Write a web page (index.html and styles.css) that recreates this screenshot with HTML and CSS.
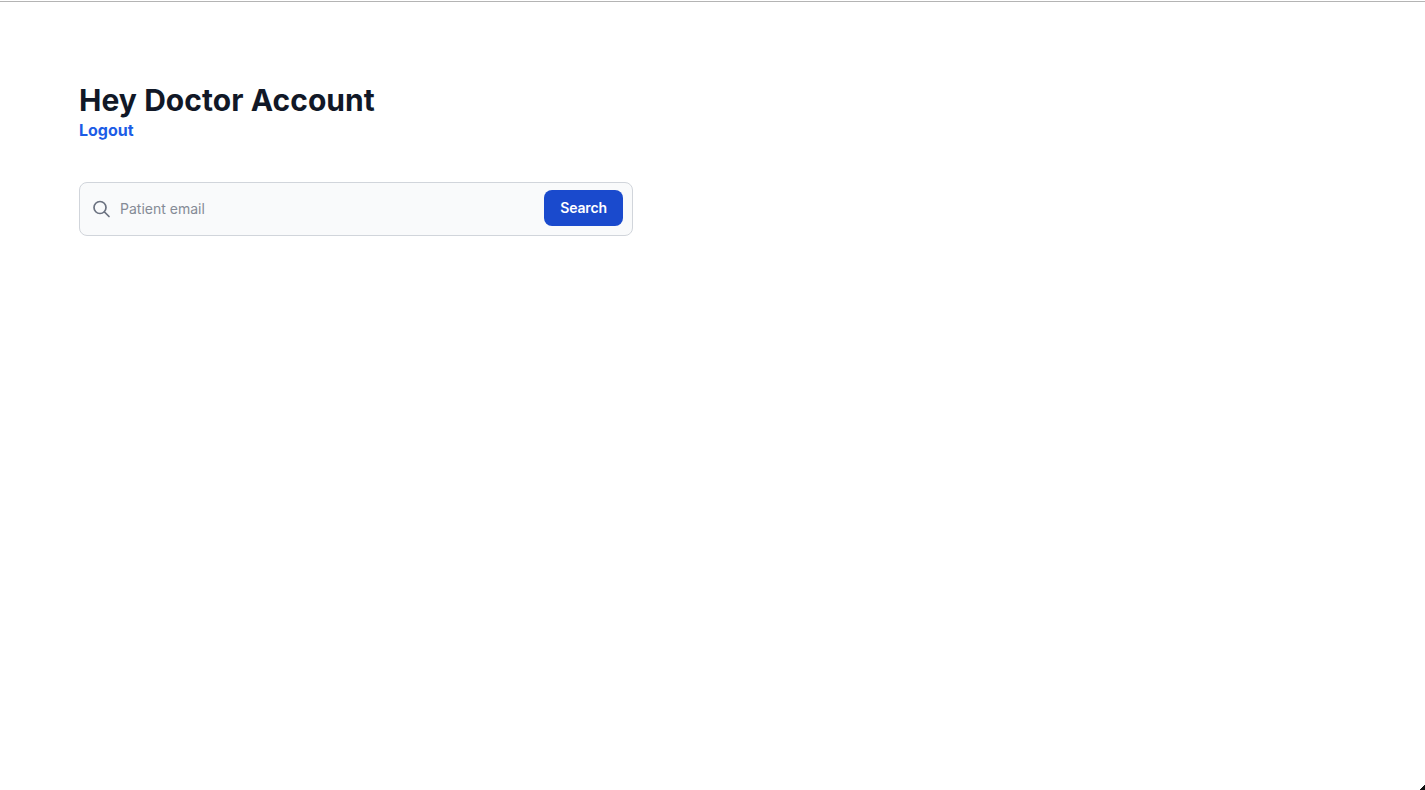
FILE: index.html
```html
<!DOCTYPE html>
<html lang="en">
<head>
    <meta charset="UTF-8">
    <title>Hey Doctor Account</title>
    <link rel="stylesheet" href="styles.css">
</head>
<body>
    <div class="topline"></div>
    <div class="page">
        <h1>Hey Doctor Account</h1>
        <a class="logout" href="#">Logout</a>
        <form class="search">
            <svg class="search-icon" width="20" height="20" viewBox="0 0 20 20" fill="none" stroke="currentColor" stroke-width="1.7" stroke-linecap="round">
                <circle cx="8" cy="8.5" r="6"/>
                <path d="M12.5 13l4.5 4.5"/>
            </svg>
            <input type="text" placeholder="Patient email">
            <button type="button">Search</button>
        </form>
    </div>
    <div class="corner"></div>
</body>
</html>
```

FILE: styles.css
```css
*{
    margin: 0;
    padding: 0;
    box-sizing: border-box;
}
html,body{
    height: 100%;
    overflow: hidden;
}
body{
    background: #fff;
    font-family: Inter, "Liberation Sans", sans-serif;
    color: #111827;
}
.topline{
    height: 1px;
    margin-top: 1px;
    background: #b4b4b4;
}
.page{
    width: 633px;
    padding: 79px 0 0 79px;
    display: flex;
    flex-direction: column;
    align-items: flex-start;
}
h1{
    font-size: 30px;
    line-height: 38px;
    font-weight: 700;
    letter-spacing: 0.06px;
}
.logout{
    font-size: 16px;
    line-height: 22px;
    font-weight: 700;
    color: #1c5ce6;
    text-decoration: none;
}
.search{
    margin-top: 41px;
    width: 554px;
    height: 54px;
    padding: 0 9px 2px 12px;
    display: flex;
    align-items: center;
    background: #f9fafb;
    border: 1px solid #d1d5db;
    border-radius: 8px;
}
.search-icon{
    flex: none;
    margin-top: 2px;
    color: #6b7280;
}
input{
    flex: 1;
    min-width: 0;
    margin-left: 8px;
    border: 0;
    outline: 0;
    background: transparent;
    font-family: inherit;
    font-size: 14px;
    color: #111827;
}
input::placeholder{
    color: #858b96;
    opacity: 1;
}
button{
    flex: none;
    width: 79px;
    height: 36px;
    padding-bottom: 1px;
    border: 0;
    border-radius: 8px;
    background: #1a4acd;
    color: #fff;
    font-family: inherit;
    font-size: 14px;
    font-weight: 600;
    letter-spacing: -0.15px;
    cursor: pointer;
}
.corner{
    position: fixed;
    right: 0;
    bottom: 0;
    width: 5px;
    height: 5px;
    background: linear-gradient(135deg, transparent 50%, #111 50%);
}
```
